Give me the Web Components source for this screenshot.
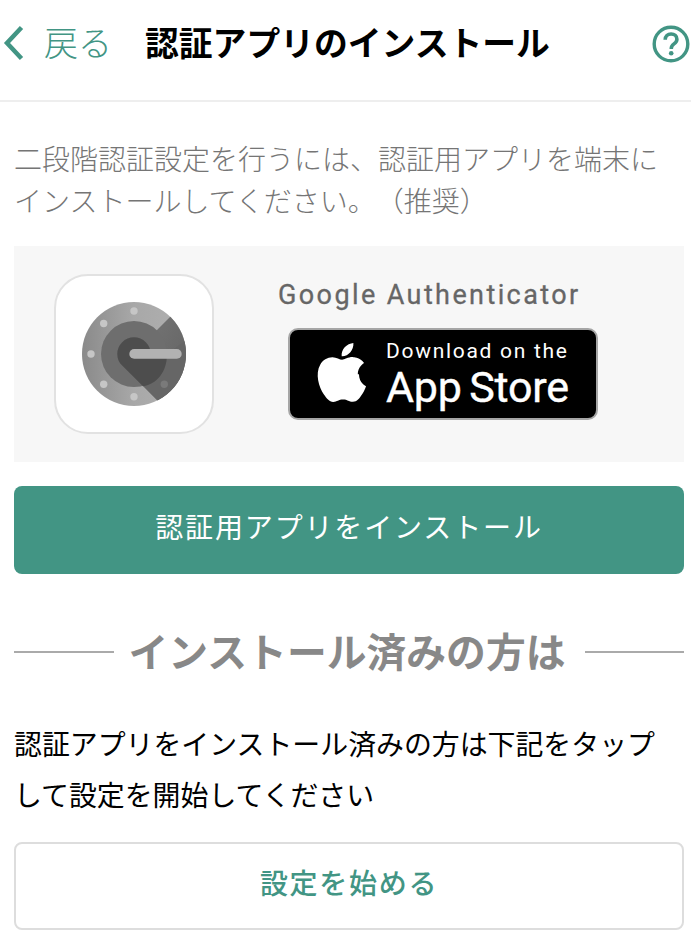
<!DOCTYPE html>
<html lang="ja"><head><meta charset="utf-8">
<style>
html,body{margin:0;padding:0;background:#fff;height:938px;overflow:hidden}
body{font-family:"Noto Sans CJK JP","Noto Sans",sans-serif;text-spacing-trim:space-all}
</style></head><body>
<install-page>
<top-bar title-text="認証アプリのインストール" back-text="戻る"></top-bar>
<intro-text>二段階認証設定を行うには、認証用アプリを端末にインストールしてください。（推奨）</intro-text>
<app-panel name="Google Authenticator"></app-panel>
<action-button kind="primary">認証用アプリをインストール</action-button>
<section-divider>インストール済みの方は</section-divider>
<body-text>認証アプリをインストール済みの方は下記をタップして設定を開始してください</body-text>
<action-button kind="outline" style="margin-top:22px">設定を始める</action-button>
</install-page>
<script>
function def(name,html){customElements.define(name,class extends HTMLElement{
  connectedCallback(){ if(this.shadowRoot)return; const r=this.attachShadow({mode:'open'}); r.innerHTML=typeof html==='function'?html(this):html; }
});}
def('install-page',`<style>:host{display:block;width:691px}</style><slot></slot>`);
def('top-bar',e=>`<style>
:host{display:flex;align-items:center;height:100px;border-bottom:2px solid #eee;color:#000}
.back{display:flex;align-items:center;color:#429584;width:145px;flex:none;padding-bottom:14px;box-sizing:border-box;height:100%}
.back svg{margin-left:3px;flex:none}
.back span{font-size:34px;font-weight:300;margin-left:20px;line-height:1;position:relative;top:-1px}
h1{font-size:33.800px;font-weight:700;margin:0;flex:1;line-height:1;padding-bottom:16px}
.help{flex:none;margin-right:1px;margin-bottom:12px;display:block}
</style>
<div class="back"><svg width="21" height="36" viewBox="0 0 21 36"><path d="M18.500 2.500 4 18l14.500 15.500" fill="none" stroke="#429584" stroke-width="4.500"/></svg><span>${e.getAttribute('back-text')}</span></div>
<h1>${e.getAttribute('title-text')}</h1>
<svg class="help" width="38" height="38" viewBox="0 0 38 38"><circle cx="19" cy="19" r="16.800" fill="none" stroke="#429584" stroke-width="3.400"/><path d="M13.200 14.800c0-3.400 2.500-5.800 5.900-5.800 3.300 0 5.800 2.100 5.800 5.200 0 2.300-1.200 3.500-2.900 4.700-1.800 1.300-2.700 2.200-2.700 4.300v.8" fill="none" stroke="#429584" stroke-width="3.600"/><circle cx="19.200" cy="28.300" r="2.300" fill="#429584"/></svg>`);
def('intro-text',`<style>:host{display:block;margin:35px 14px 0;font-size:28px;line-height:42px;color:#757575;font-weight:300;text-spacing-trim:space-all}</style><slot></slot>`);
def('app-panel',e=>`<style>
:host{display:flex;margin:25px 7px 0 14px;height:216px;background:#f7f7f7;box-sizing:border-box}
.tile{margin:28px 0 0 40px;width:160px;height:160px;box-sizing:border-box;background:#fff;border:2px solid #e2e2e2;border-radius:34px;display:flex;align-items:center;justify-content:center;flex:none}
.right{display:flex;flex-direction:column;align-items:flex-start;margin-left:64px}
.name{font:400 27px/1 Roboto,sans-serif;letter-spacing:2.400px;color:#666;margin-top:36px;-webkit-text-stroke:.3px #666}
.badge{margin:19px 0 0 10px;width:310px;height:92px;box-sizing:border-box;background:#000;border:2px solid #a6a6a6;border-radius:10px;display:flex;color:#fff}
.badge svg{margin:8px 0 0 20px;flex:none}
.t{margin-left:18px;display:flex;flex-direction:column}
.t b{font:400 21px/24px Roboto,sans-serif;letter-spacing:1.700px;margin-top:9px;white-space:nowrap}
.t i{font:400 43px/44px Roboto,sans-serif;font-style:normal;-webkit-text-stroke:.4px #fff;letter-spacing:-.2px;word-spacing:-3px;margin-top:2px;white-space:nowrap}
</style>
<div class="tile"><svg width="106" height="106" viewBox="-53 -53 106 106">
<defs>
<linearGradient id="g1" x1="0" y1="0" x2="1" y2="0"><stop offset="0" stop-color="#8a8a8a"/><stop offset=".5" stop-color="#a8a8a8"/><stop offset="1" stop-color="#b0b0b0"/></linearGradient>
<linearGradient id="g2" x1="0" y1="0" x2="1" y2="1"><stop offset="0" stop-color="#777"/><stop offset="1" stop-color="#5e5e5e"/></linearGradient>
<clipPath id="c"><circle r="52"/></clipPath>
</defs>
<circle r="52" fill="url(#g1)"/>
<path clip-path="url(#c)" d="M38-39 24-25 0 0 9 32 24 47 60 60 60-39Z" fill="url(#g2)"/>
<circle r="33" fill="#6e6e6e"/>
<path d="M9.300 32 24 47 60 30 60-20 33 0A33 33 0 0 1 9.300 32Z" clip-path="url(#c)" fill="#666"/>
<path d="M-16.700 0a16.700 16.700 0 0 1 33.400 0H33c0 18-10 30-24 32.200L-11.800 11.500C-15 8.500-16.700 5-16.700 0Z" fill="#4d4d4d"/>
<rect x="-4.700" y="-5" width="52.400" height="9.800" rx="4.900" fill="#b2b2b2"/>
<g fill="#c6c6c6"><circle cy="-43" r="3.700"/><circle cx="-30.300" cy="-30.500" r="3.700"/><circle cx="-43" r="3.700"/><circle cx="-30.300" cy="30.300" r="3.700"/><circle cy="42.700" r="3.700"/></g>
<circle cx="30.300" cy="30.300" r="3.700" fill="#7a7a7a"/>
</svg></div>
<div class="right"><div class="name">${e.getAttribute('name')}</div>
<div class="badge"><svg width="58" height="68" viewBox="0 0 50 58.600"><path fill="#fff" d="M41.200 31.200c-.1-6.400 5.200-9.500 5.400-9.700-3-4.300-7.600-4.900-9.200-5-3.900-.4-7.700 2.300-9.700 2.300s-5.100-2.300-8.400-2.200c-4.300.1-8.300 2.500-10.500 6.400-4.500 7.800-1.200 19.300 3.200 25.600 2.200 3.100 4.700 6.600 8.100 6.500 3.200-.1 4.500-2.100 8.400-2.100s5 2.100 8.500 2c3.500-.1 5.700-3.100 7.800-6.300 2.500-3.600 3.500-7.100 3.500-7.300-.1-.1-6-2.400-6.100-10.200ZM34.800 12.300c1.700-2.200 2.900-5.100 2.600-8.100-2.500.1-5.700 1.700-7.500 3.800-1.600 1.900-3 4.900-2.600 7.800 2.800.2 5.700-1.400 7.500-3.500Z"/></svg>
<div class="t"><b>Download on the</b><i>App Store</i></div></div></div>`);
def('action-button',e=>{const p=e.getAttribute('kind')==='primary';return `<style>
:host{display:flex;align-items:center;justify-content:center;box-sizing:border-box;height:88px;margin:0 7px 0 14px;border-radius:8px;font-size:28px;letter-spacing:${p?1.85:1.7}px;font-weight:${p?400:500};padding-bottom:8px;
${p?'background:#429584;color:#fff;margin-top:24px;':'background:#fff;color:#429584;border:2px solid #ddd;'}}
</style><slot></slot>`});
def('section-divider',`<style>
:host{display:flex;align-items:center;margin:53px 7px 0 14px;height:50px;gap:17px;color:#888;font-weight:700;line-height:1;white-space:nowrap}
span{font-size:39.800px;position:relative;top:-2px;left:-2px}
i{flex:1;height:2px;background:#aaa}
</style><i></i><span><slot></slot></span><i></i>`);
def('body-text',`<style>:host{display:block;margin:41px 30px 0 14px;font-size:27.900px;line-height:51px;color:#000;font-weight:400}</style><slot></slot>`);
</script></body></html>
